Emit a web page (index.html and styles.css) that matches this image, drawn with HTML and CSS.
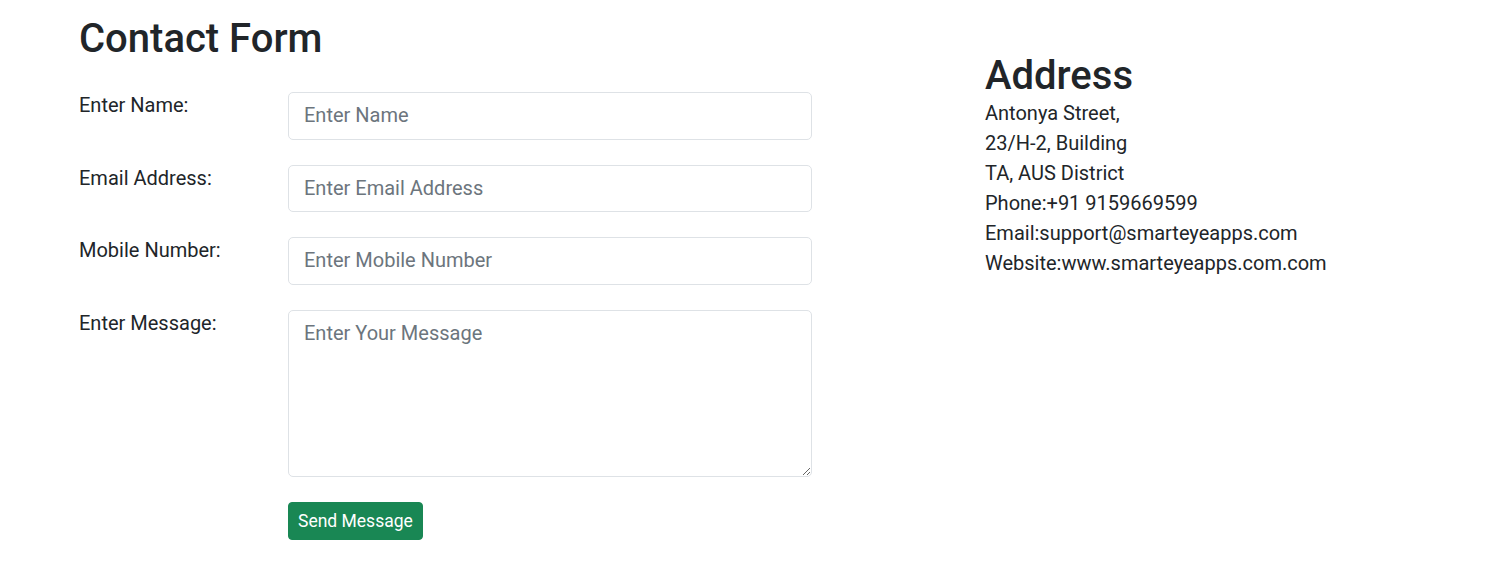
FILE: index.html
```html
<!DOCTYPE html>
<html lang="en">
<head>
<meta charset="utf-8">
<title>Contact Form</title>
<link rel="stylesheet" href="styles.css">
</head>
<body>
<div class="page">
  <section class="contact">
    <h2 class="title">Contact Form</h2>
    <form class="form">
      <div class="field">
        <label class="label" for="name">Enter Name:</label>
        <input class="control" id="name" type="text" placeholder="Enter Name">
      </div>
      <div class="field">
        <label class="label" for="email">Email Address:</label>
        <input class="control" id="email" type="email" placeholder="Enter Email Address">
      </div>
      <div class="field">
        <label class="label" for="mobile">Mobile Number:</label>
        <input class="control" id="mobile" type="text" placeholder="Enter Mobile Number">
      </div>
      <div class="field">
        <label class="label" for="msg">Enter Message:</label>
        <textarea class="control area" id="msg" placeholder="Enter Your Message"></textarea>
      </div>
      <div class="field actions">
        <span class="label"></span>
        <button type="button" class="btn">Send Message</button>
      </div>
    </form>
  </section>
  <aside class="address">
    <h2 class="title">Address</h2>
    <p class="line">Antonya Street,</p>
    <p class="line">23/H-2, Building</p>
    <p class="line">TA, AUS District</p>
    <p class="line">Phone:+91 9159669599</p>
    <p class="line">Email:support@smarteyeapps.com</p>
    <p class="line">Website:www.smarteyeapps.com.com</p>
  </aside>
</div>
</body>
</html>
```
FILE: styles.css
```css
* { box-sizing: border-box; }
html, body { margin: 0; padding: 0; background: #fff; }
body {
  font-family: Roboto, "Liberation Sans", Arial, sans-serif;
  font-size: 20px;
  line-height: 30px;
  color: #212529;
}
.page {
  display: flex;
  padding: 15px 0 0 79px;
  gap: 173px;
}
.contact { width: 733px; }
.title {
  margin: 0;
  font-size: 40px;
  font-weight: 500;
  line-height: 48px;
}
.form {
  display: flex;
  flex-direction: column;
  gap: 25px;
  padding-top: 29px;
}
.field {
  display: flex;
  align-items: flex-start;
}
.label {
  width: 209px;
  flex: none;
  margin-top: -2px;
}
.control {
  width: 524px;
  height: 47.5px;
  padding: 7px 15px 8px;
  border: 1px solid #dee2e6;
  border-radius: 5px;
  font-family: inherit;
  font-size: 20px;
  line-height: 30px;
  color: #212529;
  background: #fff;
  outline: none;
}
.control::placeholder { color: #6c757d; opacity: 1; }
.area { height: 167px; resize: vertical; display: block; }
.actions { margin-top: 0; }
.btn {
  height: 38px;
  padding: 0 9px;
  border: 1px solid #198754;
  border-radius: 4px;
  background: #198754;
  color: #fff;
  font-family: inherit;
  font-size: 17.5px;
  line-height: 26px;
  cursor: pointer;
}
.address { padding-top: 37px; }
.address .title { margin-bottom: -2px; }
.line { margin: 0; }
```
